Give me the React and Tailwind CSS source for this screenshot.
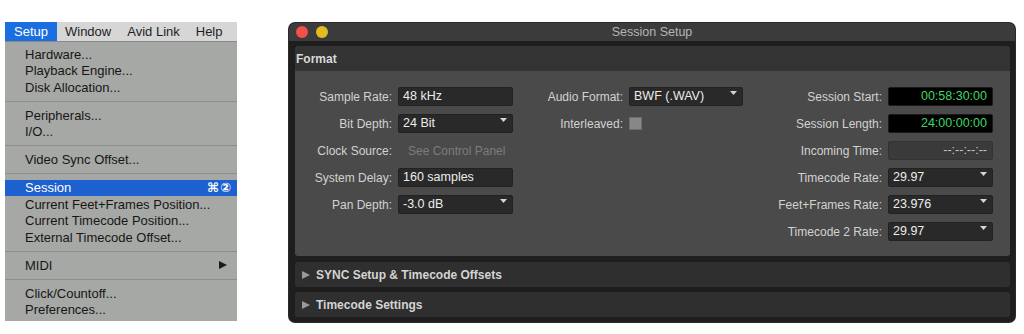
import React from 'react';

// --- small drawings ---
const DownArrow = () => (
  <svg width="7" height="4" viewBox="0 0 7 4" className="absolute right-[5px] top-[3px]">
    <polygon points="0,0 7,0 3.5,4" fill="#d4d4d4" />
  </svg>
);

const RightArrow = ({ color = '#1a1a1a', size = 9 }) => (
  <svg width={size} height={size} viewBox="0 0 9 9">
    <polygon points="0,0 9,4.5 0,9" fill={color} />
  </svg>
);

// --- menu ---
const MenuItem = ({ label, active, shortcut, submenu }) => (
  <div
    className={`h-[16.5px] flex items-center justify-between pl-[20px] pr-[5px] ${
      active ? 'bg-[#1d60d0] text-white' : 'text-[#161616]'
    }`}
  >
    <span>{label}</span>
    {shortcut && <span className="text-[13px] font-bold tracking-[1px] font-['DejaVu_Sans',sans-serif]">{shortcut}</span>}
    {submenu && (
      <span className="pr-[5px]">
        <RightArrow size={8} />
      </span>
    )}
  </div>
);

const Separator = () => (
  <div className="h-[11.5px] flex items-center">
    <div className="w-full h-px bg-[#8d8f8c]" />
  </div>
);

const SetupMenu = () => (
  <div className="w-[232px] font-['Liberation_Sans',Arial,sans-serif] text-[13px]">
    <div className="h-[20px] flex items-center bg-[#d6d6d6] border-b border-[#8a8a8a] text-[#1e1e1e]">
      <span className="h-full flex items-center px-[9px] bg-[#1b6ee0] text-white">Setup</span>
      <span className="px-[8px]">Window</span>
      <span className="px-[8px]">Avid Link</span>
      <span className="px-[8px]">Help</span>
    </div>
    <div className="bg-[#a6a8a5] pt-[4px] pb-[3px]">
      <MenuItem label="Hardware..." />
      <MenuItem label="Playback Engine..." />
      <MenuItem label="Disk Allocation..." />
      <Separator />
      <MenuItem label="Peripherals..." />
      <MenuItem label="I/O..." />
      <Separator />
      <MenuItem label="Video Sync Offset..." />
      <Separator />
      <MenuItem label="Session" active shortcut="⌘②" />
      <MenuItem label="Current Feet+Frames Position..." />
      <MenuItem label="Current Timecode Position..." />
      <MenuItem label="External Timecode Offset..." />
      <Separator />
      <MenuItem label="MIDI" submenu />
      <Separator />
      <MenuItem label="Click/Countoff..." />
      <MenuItem label="Preferences..." />
    </div>
  </div>
);

// --- session setup window ---
const Label = ({ children }) => (
  <div className="h-[19px] flex items-center justify-end text-[12px] text-[#d2d2d2] whitespace-nowrap">{children}</div>
);

const Field = ({ children, arrow, variant = 'dark', right }) => {
  const styles = {
    dark: 'bg-[#292929] border-[#222222] text-[#ececec]',
    black: 'bg-black border-[#1a1a1a] text-[#3dd865]',
    muted: 'bg-[#3a3a3a] border-[#333333] text-[#c4c4c4]',
  };
  return (
    <div
      className={`relative h-[19px] flex items-center rounded-[2px] border text-[12.5px] ${styles[variant]} ${
        right ? 'justify-end pr-[5px]' : 'pl-[4px]'
      }`}
    >
      {children}
      {arrow && <DownArrow />}
    </div>
  );
};

const Row = ({ label, children }) => (
  <>
    <Label>{label}</Label>
    {children}
  </>
);

const CollapsedSection = ({ title }) => (
  <div className="h-[25px] flex items-center gap-[6px] pl-[7px] bg-[#2f2f2f] rounded-[3px] text-[12px] font-bold text-[#d4d4d4]">
    <RightArrow color="#9a9a9a" size={8} />
    <span>{title}</span>
  </div>
);

const SessionSetup = () => (
  <div className="w-[726px] h-[299px] mt-[1px] flex flex-col rounded-[6px] overflow-hidden bg-[#1e1e1e] font-['Liberation_Sans',Arial,sans-serif] shadow-[0_0_0_1px_#2a2a2a]">
    {/* title bar */}
    <div className="relative h-[18px] flex items-center gap-[8px] pl-[7px] bg-[#3b3b3b]">
      <span className="w-[12px] h-[12px] rounded-full bg-[#f2514b]" />
      <span className="w-[12px] h-[12px] rounded-full bg-[#e2bd22]" />
      <span className="absolute inset-0 flex items-center justify-center text-[12.5px] text-[#b6b6b6]">Session Setup</span>
    </div>

    <div className="flex-1 flex flex-col gap-[6px] pt-[5px] pl-[6px] pr-[5px]">
      {/* format panel */}
      <div className="rounded-[3px] overflow-hidden">
        <div className="h-[25px] flex items-center pl-[1px] bg-[#333333] text-[12px] font-bold text-[#d8d8d8]">Format</div>
        <div className="h-[185px] bg-[#4a4a4a] pt-[16px] flex items-start">
          <div className="grid grid-cols-[97px_115px] gap-x-[6px] gap-y-[8px]">
            <Row label="Sample Rate:">
              <Field>48 kHz</Field>
            </Row>
            <Row label="Bit Depth:">
              <Field arrow>24 Bit</Field>
            </Row>
            <Row label="Clock Source:">
              <div className="h-[19px] flex items-center pl-[10px] text-[12px] text-[#7c7c7c] whitespace-nowrap">See Control Panel</div>
            </Row>
            <Row label="System Delay:">
              <Field>160 samples</Field>
            </Row>
            <Row label="Pan Depth:">
              <Field arrow>-3.0 dB</Field>
            </Row>
          </div>

          <div className="grid grid-cols-[110px_114px] gap-x-[6px] gap-y-[8px]">
            <Row label="Audio Format:">
              <Field arrow>BWF (.WAV)</Field>
            </Row>
            <Row label="Interleaved:">
              <div className="h-[19px] flex items-center">
                <span className="w-[13px] h-[13px] bg-[#878787] border border-[#6e6e6e]" />
              </div>
            </Row>
          </div>

          <div className="grid grid-cols-[139px_105px] gap-x-[6px] gap-y-[8px]">
            <Row label="Session Start:">
              <Field variant="black" right>00:58:30:00</Field>
            </Row>
            <Row label="Session Length:">
              <Field variant="black" right>24:00:00:00</Field>
            </Row>
            <Row label="Incoming Time:">
              <Field variant="muted" right>--:--:--:--</Field>
            </Row>
            <Row label="Timecode Rate:">
              <Field arrow>29.97</Field>
            </Row>
            <Row label="Feet+Frames Rate:">
              <Field arrow>23.976</Field>
            </Row>
            <Row label="Timecode 2 Rate:">
              <Field arrow>29.97</Field>
            </Row>
          </div>
        </div>
      </div>

      <div className="flex flex-col gap-[5px]">
        <CollapsedSection title="SYNC Setup & Timecode Offsets" />
        <CollapsedSection title="Timecode Settings" />
      </div>
    </div>
  </div>
);

export default function App() {
  return (
    <div className="w-[1024px] h-[334px] bg-white flex items-start pt-[22px] pl-[5px] gap-[52px] overflow-hidden">
      <SetupMenu />
      <SessionSetup />
    </div>
  );
}
